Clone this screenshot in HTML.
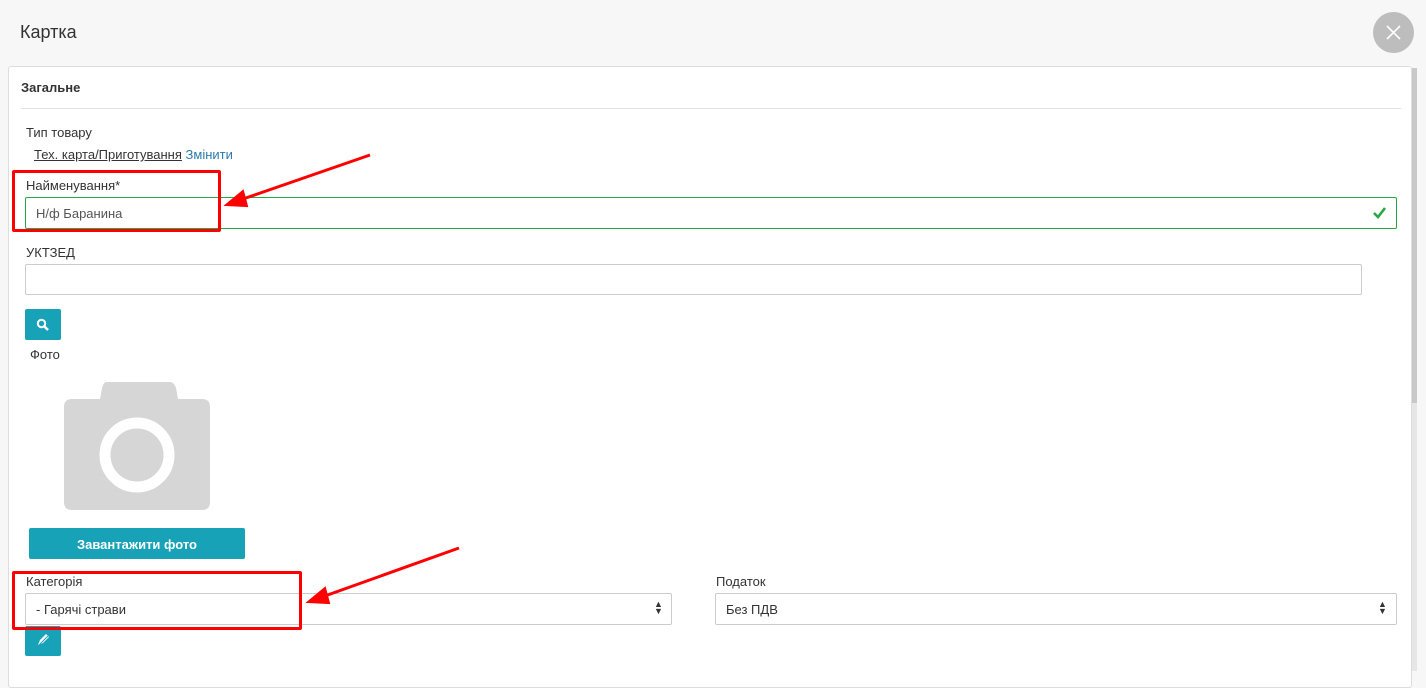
<!DOCTYPE html>
<html><head><meta charset="utf-8"><style>
body{margin:0;width:1426px;height:671px;background:#f7f7f7;font-family:"Liberation Sans","DejaVu Sans",sans-serif;position:relative;overflow:hidden;color:#333}
.a{position:absolute}
.t{font-size:13px}
.inp{position:absolute;border:1px solid #ccc;background:#fff;border-radius:2px;box-sizing:border-box;font-size:13px;padding-left:10px;display:flex;align-items:center}
.btn{position:absolute;background:#17a2b8;border-radius:2px}
</style></head><body>
<div class="a" style="left:20px;top:22px;font-size:18px;color:#333">Картка</div>
<div class="a" style="left:1373px;top:12px;width:41px;height:41px;border-radius:50%;background:#bdbdbd"></div>
<svg class="a" style="left:1386px;top:25px" width="15" height="15"><path d="M1 1L14 14M14 1L1 14" stroke="#fff" stroke-width="1.6"/></svg>
<div class="a" style="left:8px;top:66px;width:1402px;height:620px;background:#fff;border:1px solid #ddd;border-radius:3px"></div>
<div class="a" style="left:1412px;top:68px;width:5px;height:335px;background:#c8c8c8"></div>
<div class="a" style="left:1412px;top:403px;width:5px;height:268px;background:#e6e6e6"></div>
<div class="a t" style="left:21px;top:80px;font-weight:bold;color:#333">Загальне</div>
<div class="a" style="left:21px;top:108px;width:1380px;height:1px;background:#e3e3e3"></div>
<div class="a t" style="left:26px;top:125px">Тип товару</div>
<div class="a t" style="left:34px;top:147px"><span style="text-decoration:underline">Тех. карта/Приготування</span> <span style="color:#2a7ab0">Змінити</span></div>
<div class="a t" style="left:26px;top:178px">Найменування*</div>
<div class="inp" style="left:25px;top:197px;width:1372px;height:32px;border-color:#28a745;color:#555">Н/ф Баранина</div>
<svg class="a" style="left:1372px;top:206px" width="15" height="13"><path d="M2 7L6 11L13 2" stroke="#28a745" stroke-width="2.6" fill="none"/></svg>
<div class="a t" style="left:26px;top:245px">УКТЗЕД</div>
<div class="inp" style="left:25px;top:264px;width:1337px;height:31px"></div>
<div class="btn" style="left:25px;top:309px;width:36px;height:31px"></div>
<svg class="a" style="left:36px;top:318px" width="14" height="14"><circle cx="5.5" cy="5.5" r="3.7" stroke="#fff" stroke-width="2" fill="none"/><path d="M8.5 8.5L12 12" stroke="#fff" stroke-width="2.6"/></svg>
<div class="a t" style="left:30px;top:347px">Фото</div>
<svg class="a" style="left:64px;top:382px" width="147" height="129"><path d="M42 0H106Q110 0 112 6L114 17H138Q146 17 146 25V120Q146 128 138 128H8Q0 128 0 120V25Q0 17 8 17H36L38 6Q40 0 42 0Z" fill="#d6d6d6"/><circle cx="73" cy="73" r="32" fill="none" stroke="#fff" stroke-width="11"/></svg>
<div class="btn" style="left:29px;top:528px;width:216px;height:31px;color:#fff;font-weight:bold;font-size:13px;text-align:center;line-height:33px">Завантажити фото</div>
<div class="a t" style="left:26px;top:574px">Категорія</div>
<div class="inp" style="left:25px;top:593px;width:647px;height:32px">- Гарячі страви</div>
<div class="a" style="left:654px;top:601px;font-size:9px;line-height:7px;color:#333">▲<br>▼</div>
<div class="a t" style="left:716px;top:574px">Податок</div>
<div class="inp" style="left:715px;top:593px;width:682px;height:32px">Без ПДВ</div>
<div class="a" style="left:1378px;top:601px;font-size:9px;line-height:7px;color:#333">▲<br>▼</div>
<div class="btn" style="left:25px;top:626px;width:36px;height:30px"></div>
<svg class="a" style="left:36px;top:633px" width="14" height="14"><path d="M2 12L4 7L10 1L13 4L7 10Z" fill="#fff"/><path d="M3 12L12 3" stroke="#17a2b8" stroke-width="1"/></svg>
<div class="a" style="left:12px;top:170px;width:203px;height:56px;border:3px solid #f00;border-radius:2px"></div>
<div class="a" style="left:12px;top:571px;width:284px;height:53px;border:3px solid #f00;border-radius:2px"></div>
<svg class="a" style="left:0;top:0" width="1426" height="671"><path d="M370 155L240 200" stroke="#f00" stroke-width="3"/><path d="M226 205L243 191L247 206Z" fill="#f00" stroke="#f00" stroke-width="2"/><path d="M459 548L322 597" stroke="#f00" stroke-width="3"/><path d="M308 602L325 588L329 603Z" fill="#f00" stroke="#f00" stroke-width="2"/></svg>
</body></html>
